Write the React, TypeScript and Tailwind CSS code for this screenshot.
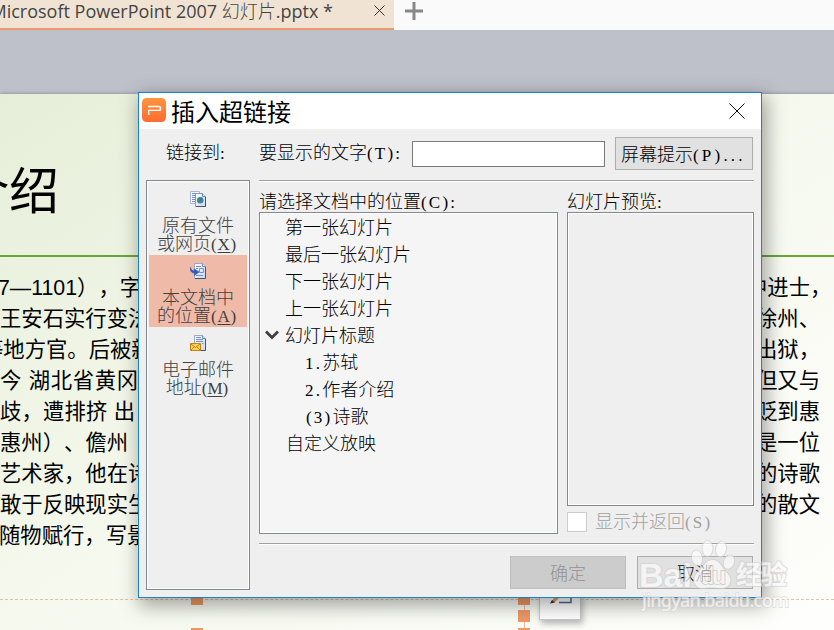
import type { ReactNode } from "react"

const slideLines = [
  { left: "7—1101），字", indent: "-ml-[2px]", right: "中进士，", rightIndent: "ml-[746px]" },
  { left: "王安石实行变法", indent: "ml-0", right: "徐州、", rightIndent: "ml-[756px]" },
  { left: "等地方官。后被新", indent: "-ml-[18px]", right: "出狱，", rightIndent: "ml-[756px]" },
  { left: "今 湖北省黄冈", indent: "ml-0 tracking-[0.7px]", right: "但又与", rightIndent: "ml-[756px]" },
  { left: "歧，遭排挤 出", indent: "ml-0 tracking-[0.2px]", right: "贬到惠", rightIndent: "ml-[756px]" },
  { left: "惠州）、儋州", indent: "ml-0", right: "是一位", rightIndent: "ml-[756px]" },
  { left: "艺术家，他在诗", indent: "ml-0", right: "的诗歌", rightIndent: "ml-[756px]" },
  { left: "敢于反映现实生", indent: "ml-0", right: "的散文", rightIndent: "ml-[756px]" },
  { left: "随物赋行，写景", indent: "-ml-px", right: "", rightIndent: "ml-[756px]" },
]

const places = [
  { prefix: "", text: "第一张幻灯片", indent: "pl-[25px]" },
  { prefix: "", text: "最后一张幻灯片", indent: "pl-[25px]" },
  { prefix: "", text: "下一张幻灯片", indent: "pl-[25px]" },
  { prefix: "", text: "上一张幻灯片", indent: "pl-[25px]" },
  { prefix: "", text: "幻灯片标题", indent: "pl-[5px]", open: true },
  { prefix: "1.", text: "苏轼", indent: "pl-[45px]" },
  { prefix: "2.", text: "作者介绍", indent: "pl-[45px]" },
  { prefix: "(3)", text: "诗歌", indent: "pl-[46px]" },
  { prefix: "", text: "自定义放映", indent: "pl-[26px]" },
]

const Half = ({ children, tracking = "tracking-[2.2px]" }: { children: ReactNode; tracking?: string }) => (
  <span className={`font-['Liberation_Serif',serif] text-[17px] leading-none font-normal ${tracking}`}>{children}</span>
)

const PageIcon = ({ kind }: { kind: "web" | "place" | "mail" }) => (
  <svg width="16" height="16" viewBox="0 0 16 16" fill="none">
    <defs>
      <linearGradient id={`sheet-${kind}`} x1="0" y1="0" x2="1" y2="1">
        <stop offset="0" stopColor="#ffffff" />
        <stop offset="1" stopColor="#c9d6ee" />
      </linearGradient>
    </defs>
    {kind === "web" ? (
      <>
        <path d="M.5.5h9v12h-9z" fill="#f4f7fe" stroke="#a9b6d2" />
        <path d="M2 2.500h4M2 4.500h3M2 6.500h3M2 8.500h3M2 10.500h3" stroke="#6f8fdc" />
        <path d="M5.500 2.500h7l3 3v10h-10z" fill="url(#sheet-web)" stroke="#8796b8" />
        <path d="M15.500 6v9.500H6" stroke="#46536f" />
        <path d="M12.500 2.500v3h3" fill="#dbe4f6" stroke="#7787aa" />
        <circle cx="10.200" cy="9.300" r="3.200" fill="#3f74cf" />
        <path d="M7.500 9c.5-2 2-3 3.500-2.500l-1 2-1 .5-.5 1.500zM10 12l1.500-2.500 1.700.5-1.200 2z" fill="#37a044" />
      </>
    ) : (
      <>
        <path d="M4.500.5h8l3 3v12h-11z" fill={`url(#sheet-${kind})`} stroke="#9ba8c6" />
        <path d="M15.500 4v11.500H5" stroke="#46536f" />
        <path d="M12.500.5v3h3" fill="#dbe4f6" stroke="#7787aa" />
      </>
    )}
    {kind === "place" && (
      <>
        <path d="M6 3.500h5M6 5.500h2M9.500 5.500h4v4h-4zM6 12.500h7" stroke="#6f8fdc" />
        <path d="M.5 4.500c-1 3 1 5.500 4 5.500v2.500L9 9 4.500 6v2C2.500 8 1 7 .5 4.500z" fill="#2f5fc8" stroke="#2450ad" strokeWidth=".6" />
      </>
    )}
    {kind === "mail" && (
      <>
        <path d="M6 2.500h5M6 4.500h7M6 6.500h7M12 8.500h1.500" stroke="#6f8fdc" />
        <path d="M.5 8.500h10v7H.5z" fill="#ffd35a" stroke="#c58510" />
        <path d="M1 9l4.500 3.500L10 9M1 15l3-3M10 15l-3-3" stroke="#c58510" />
      </>
    )}
  </svg>
)

const LinkType = ({ kind, top, bottom, hotkey, tracking, active }: {
  kind: "web" | "place" | "mail"
  top: string
  bottom: string
  hotkey: string
  tracking: string
  active?: boolean
}) => (
  <div className={`flex h-[72px] flex-col items-center pt-2 text-[#404040] ${active ? "bg-[#f0baa8]" : ""}`}>
    <PageIcon kind={kind} />
    <div className="mt-2 text-center leading-[18px]">
      <div className="h-[18px]">{top}</div>
      <div className="-ml-[2px] h-[18px]">
        {bottom}
        <Half tracking={tracking}>(<span className="underline underline-offset-2">{hotkey}</span>)</Half>
      </div>
    </div>
  </div>
)

const Separator = () => <div className="h-[2px] border-t border-[#a0a0a0] bg-white" />

const TabBar = () => (
  <header className="flex h-[30px] bg-[#fafafa]">
    <div className="flex h-[30px] w-[394px] items-start justify-end overflow-hidden border-b-2 border-[#ee9a6b] bg-[#f1e3d3]">
      <span className="whitespace-nowrap font-['Open_Sans','Noto_Sans_CJK_SC',sans-serif] text-[18px] leading-[23px] text-[#444]">
        Microsoft PowerPoint 2007 <span className="font-light">幻灯片</span>.pptx *
      </span>
      <svg className="mt-[5px] mr-[9px] ml-[41px] shrink-0" width="11" height="11" stroke="#333" fill="none">
        <path d="M.5.5l10 10M10.500.5l-10 10" />
      </svg>
    </div>
    <svg className="mt-[2px] ml-[11px]" width="18" height="18" stroke="#888" strokeWidth="3">
      <path d="M9 0v18M0 9h18" />
    </svg>
  </header>
)

const Slide = () => (
  <main className="h-[536px] overflow-hidden bg-linear-to-br from-[#e6eed8] via-[#f6f9ee] to-[#fefefc] font-['Liberation_Sans','Noto_Sans_CJK_SC',sans-serif] text-black shadow-[0_-1px_3px_#999ba4] [text-spacing-trim:space-all]">
    <h1 className="-ml-[41px] h-[161px] pt-[63px] text-[50px] leading-[70px]">介绍</h1>
    <div className="h-[2px] bg-[#6ca535]" />
    <div className="mt-[16px] text-[21.33px] leading-[31px]">
      {slideLines.map(line => (
        <div key={line.left} className="grid h-[31px] whitespace-nowrap">
          <span className={`col-start-1 row-start-1 w-[175px] ${line.indent}`}>{line.left}</span>
          <span className={`col-start-1 row-start-1 ${line.rightIndent}`}>{line.right}</span>
        </div>
      ))}
    </div>
    <div className="mt-[47px] flex h-[31px] border-t border-dashed border-[#e7bda3]" />
  </main>
)

const Handles = () => (
  <div className="absolute top-[593px] left-0 flex h-[37px] w-[600px]">
    <div className="ml-[191px] flex w-3 flex-col justify-between">
      <i className="h-3 bg-[#ee9966]" />
      <i className="h-[2px] bg-[#ee9966]" />
    </div>
    <div className="ml-[315px] flex w-3 flex-col">
      <i className="h-3 bg-[#ee9966]" />
      <i className="mx-auto h-[5px] border-l border-dashed border-[#f2bd9c]" />
      <i className="h-3 bg-[#ee9966]" />
      <i className="mx-auto h-[6px] border-l border-dashed border-[#f2bd9c]" />
      <i className="h-[2px] bg-[#ee9966]" />
    </div>
    <div className="ml-[9px] h-[27px] w-[42px] border border-[#c8c8c8] bg-white shadow-[2px_4px_6px_#bbb]">
      <svg width="40" height="25" fill="none">
        <path d="M19 8.500h12V3" stroke="#4a6c98" strokeWidth="1.500" />
        <path d="M11 8l3-4 4-3 2 2-5 5z" fill="#d6a45c" />
        <path d="M10 9.500l2-3.500 3 2.500z" fill="#333" />
      </svg>
    </div>
  </div>
)

const HyperlinkDialog = () => (
  <section className="absolute top-[92px] left-[138px] flex h-[506px] w-[624px] flex-col border border-[#1a80d2] bg-[#efefef] font-['Noto_Sans_CJK_SC',sans-serif] text-[18px] font-light text-black shadow-[3px_6px_18px_2px_#00000058]">
    <div className="flex h-9 shrink-0 items-center bg-white pl-[3px]">
      <svg className="-mt-[2px]" width="24" height="24" viewBox="0 0 24 24" fill="none">
        <defs>
          <linearGradient id="logo" x1="0" y1="0" x2="0" y2="1">
            <stop offset="0" stopColor="#ff9440" />
            <stop offset="1" stopColor="#ff6c30" />
          </linearGradient>
        </defs>
        <rect width="24" height="24" rx="4.500" fill="url(#logo)" />
        <path d="M6 8.500h10.500q2 0 2 1.500v.9q0 1.500-2 1.500H6.700v4.600" stroke="#fff" strokeWidth="1.400" />
      </svg>
      <h2 className="ml-[5px] text-[24px] leading-9 font-normal">插入超链接</h2>
      <svg className="-mt-px mr-[16px] ml-auto" width="16" height="16" stroke="#111" fill="none">
        <path d="M.5.5l15 15M15.500.5l-15 15" />
      </svg>
    </div>

    <div className="flex flex-1 pt-2 pl-[7px]">
      <div className="flex w-[104px] flex-col">
        <div className="h-[43px] pl-5 leading-[29px]">链接到<Half>:</Half></div>
        <div className="h-[410px] border border-[#828790] p-px outline-1 -outline-offset-2 outline-white">
          <div className="px-px pt-px">
            <LinkType kind="web" top="原有文件" bottom="或网页" hotkey="X" tracking="tracking-[0.8px]" />
            <LinkType kind="place" top="本文档中" bottom="的位置" hotkey="A" tracking="tracking-[0.8px]" active />
            <LinkType kind="mail" top="电子邮件" bottom="地址" hotkey="M" tracking="tracking-[0px]" />
          </div>
        </div>
      </div>

      <div className="ml-[9px] flex w-[495px] flex-col">
        <div className="flex h-[43px] items-start">
          <label className="w-[153px] whitespace-nowrap leading-[29px]">要显示的文字<Half>(T):</Half></label>
          <input className="mt-1 h-[26px] w-[193px] border border-[#7a7a7a] bg-white" />
          <button className="ml-[10px] h-[33px] w-[138px] border border-[#adadad] bg-[#e1e1e1] pb-[2px] pl-[5px] text-left leading-[28px] whitespace-nowrap">
            屏幕提示<Half tracking="tracking-[3.2px]">(P)...</Half>
          </button>
        </div>
        <Separator />
        <div className="flex">
          <div className="w-[299px]">
            <div className="h-[30px] leading-[36px]">请选择文档中的位置<Half>(C):</Half></div>
            <ul className="h-[322px] border border-[#828790] bg-[#f5f5f5] outline-1 -outline-offset-2 outline-white">
              {places.map(place => (
                <li key={place.text} className={`flex h-[27px] items-center leading-[27px] ${place.indent}`}>
                  {place.open && (
                    <svg className="mr-[6px]" width="14" height="10" fill="none" stroke="#404040" strokeWidth="2.800">
                      <path d="M1 1.500l6 6 6-6" />
                    </svg>
                  )}
                  <span className="h-[27px]">
                    {place.prefix && <Half>{place.prefix}</Half>}
                    {place.text}
                  </span>
                </li>
              ))}
            </ul>
          </div>
          <div className="ml-[9px] w-[187px]">
            <div className="h-[30px] leading-[36px]">幻灯片预览<Half>:</Half></div>
            <div className="h-[294px] border border-[#828790] outline-1 -outline-offset-2 outline-white" />
            <div className="mt-[6px] flex h-5 items-center text-[#a0a0a0]">
              <span className="mr-[8px] size-5 border border-[#ccc] bg-white" />
              <span className="h-5 leading-[16px]">显示并返回<Half>(S)</Half></span>
            </div>
          </div>
        </div>
        <div className="mt-[9px]">
          <Separator />
        </div>
        <div className="mt-[11px] flex justify-end gap-[11px] pr-px">
          <button className="h-[33px] w-[116px] border border-[#bfbfbf] bg-[#ccc] pb-[2px] leading-[28px] text-[#929292]">确定</button>
          <button className="h-[33px] w-[116px] border border-[#adadad] bg-[#e1e1e1] pb-[2px] leading-[28px]">取消</button>
        </div>
      </div>
    </div>
  </section>
)

const Watermark = () => (
  <svg
    className="pointer-events-none absolute top-[536px] left-[636px] opacity-65"
    width="160"
    height="80"
    fill="#fff"
    stroke="#cfcfcf"
    strokeWidth="2"
    paintOrder="stroke"
  >
    <text x="3" y="51" fontSize="34" fontWeight="700" textLength="53" lengthAdjust="spacingAndGlyphs" fontFamily="Liberation Sans, sans-serif">Bai</text>
    <ellipse cx="61" cy="22" rx="5" ry="7.500" transform="rotate(-12 61 22)" />
    <ellipse cx="71.500" cy="12.500" rx="5" ry="7.500" />
    <ellipse cx="85" cy="13" rx="5" ry="7.500" transform="rotate(10 85 13)" />
    <ellipse cx="93" cy="26" rx="5" ry="7" transform="rotate(20 93 26)" />
    <path d="M77 24c7 0 8 7 13 12 8 7 4 16-4 16-7 0-11-1-18 0-9 1-13-8-7-15 6-5 8-13 16-13z" />
    <text x="64" y="48" fontSize="23" fontWeight="700" strokeWidth="1.500" stroke="#bdbdbd" textLength="26" fontFamily="Liberation Sans, sans-serif">du</text>
    <text x="100" y="48" fontSize="26" fontWeight="700" textLength="51" fontFamily="Noto Sans CJK SC, sans-serif">经验</text>
    <text x="6" y="71" fontSize="18" fontWeight="500" strokeWidth="1.500" textLength="147" fontFamily="Noto Sans, sans-serif">jingyan.baidu.com</text>
  </svg>
)

export default function App() {
  return (
    <div className="relative h-[630px] w-[834px] overflow-hidden bg-[#bfc1ca]">
      <TabBar />
      <div className="h-16" />
      <Slide />
      <Handles />
      <HyperlinkDialog />
      <Watermark />
    </div>
  )
}
